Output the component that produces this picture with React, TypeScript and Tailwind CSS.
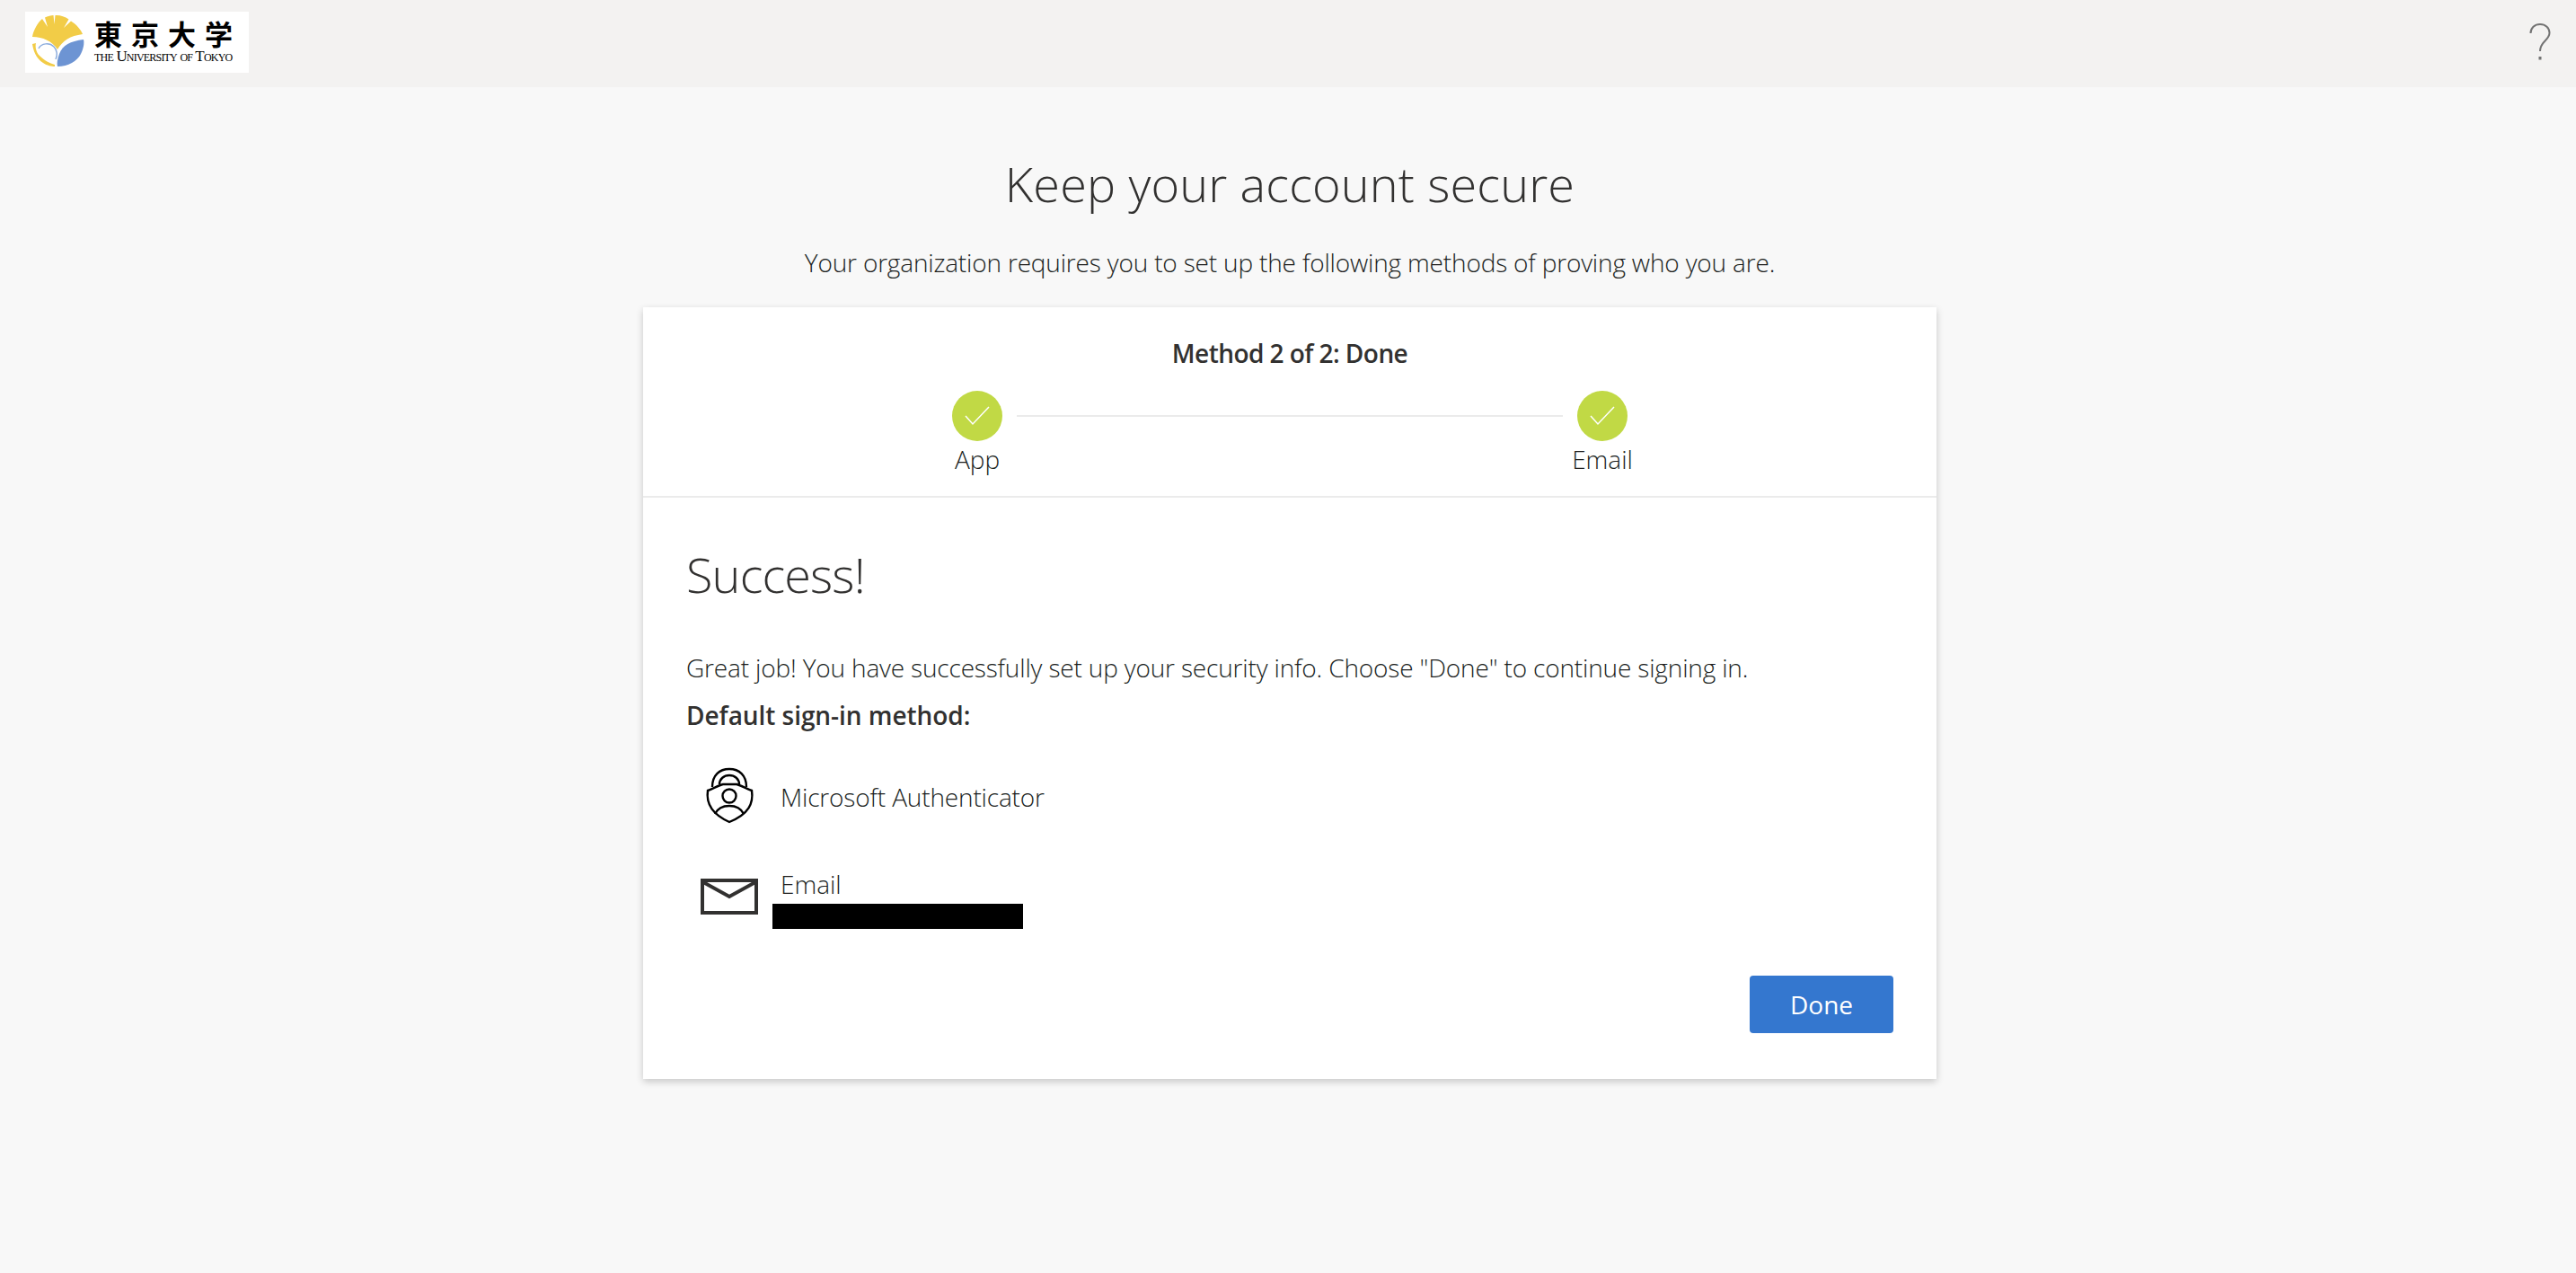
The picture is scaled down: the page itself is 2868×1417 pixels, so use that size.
const font = "font-['Open_Sans','Noto_Sans',sans-serif]";

function Logo() {
  return (
    <div className="flex h-[68px] w-[249px] items-start bg-white">
      <svg width="80" height="68" viewBox="0 3 80 68" className="-mr-[3px] shrink-0">
        <path d="M8 31 C9 24 14 15 19 11 L25 20 L22 9.5 C25 8 29 7 31.5 7 L32.5 17 L33.5 7 C38 6.5 44 8 48.5 11.5 L43 21 L51 13.5 C57 17 62 23 64 28 C50 30 42 35 36 45 C30 36 20 31 8 31Z" fill="#f2cc47" />
        <path d="M65 34 C50 36 42 40 38 50 C36 56 35 60 36 64 C48 64 58 58 62 50 C65 44 66 38 65 34Z" fill="#6d94d3" />
        <path d="M8 39 C9 46 12 55 20 60 C24 63 30 64 33 64 L33 62 C27 60 22 58 16 52 C12 48 11 42 12 38Z" fill="#f2cc47" />
        <path d="M15 44 C18 38 27 37 32 42 C36 46 36 52 34 56" fill="none" stroke="#8eaede" strokeWidth="1.5" />
      </svg>
      <div className="flex flex-col items-start pt-[6px]">
        <div className="font-['Noto_Sans_CJK_JP',serif] text-[31px] leading-[36px] font-bold tracking-[10px] whitespace-nowrap text-black">東京大学</div>
        <div className="mt-[1px] font-['Liberation_Serif',serif] text-[17px] leading-[14px] tracking-[-0.8px] whitespace-nowrap text-black [font-variant-caps:small-caps]">the University of Tokyo</div>
      </div>
    </div>
  );
}

function Step({ label }: { label: string }) {
  return (
    <div className="flex w-[80px] flex-col items-center">
      <div className="h-[56px] w-[56px] rounded-full bg-[#c1d945]">
        <svg width="56" height="56" viewBox="0 0 56 56" fill="none">
          <path d="M15 28 L23 37 L41 18" stroke="#fff" strokeWidth="1.5" />
        </svg>
      </div>
      <div className="text-[28px] leading-[40px] font-light">{label}</div>
    </div>
  );
}

export default function App() {
  return (
    <div className={`${font} min-h-[1417px] bg-[#f8f8f8] text-[#201f1e]`}>
      <header className="flex h-[97px] items-start justify-between bg-[#f3f2f1] pt-[13px] pr-[28px] pl-[28px]">
        <Logo />
        <svg width="24" height="42" viewBox="0 0 24 42" fill="none" className="mt-[13px]">
          <path d="M1.5 11 C1.5 5 6 1 12 1 C18 1 22.5 5 22.5 10.5 C22.5 19 12 20 12 31" stroke="#737373" strokeWidth="2" />
          <rect x="10.5" y="37" width="3" height="3.5" fill="#737373" />
        </svg>
      </header>
      <main className="flex flex-col items-center pl-[4px]">
        <h1 className="mt-[72px] text-[54px] leading-[70px] font-light tracking-[0.15px] text-[#323130]">Keep your account secure</h1>
        <p className="mt-[33px] text-[28px] leading-[40px] font-light tracking-[-0.17px]">Your organization requires you to set up the following methods of proving who you are.</p>
        <section className="mt-[30px] w-[1440px] bg-white shadow-[0_3px_8px_rgba(0,0,0,0.2)]">
          <div className="flex h-[212px] flex-col items-center border-b-2 border-[#ebebeb] pt-[31px]">
            <div className="text-[28px] leading-[40px] font-semibold tracking-[-0.55px] text-[#323130]">Method 2 of 2: Done</div>
            <div className="mt-[22px] flex w-[776px] items-start justify-between">
              <Step label="App" />
              <div className="mt-[27px] h-[2px] w-[608px] bg-[#ebebeb]" />
              <Step label="Email" />
            </div>
          </div>
          <div className="flex h-[647px] flex-col px-[48px]">
            <h2 className="mt-[47px] text-[54px] leading-[76px] font-light tracking-[-0.85px] text-[#323130]">Success!</h2>
            <p className="mt-[46px] text-[28px] leading-[40px] font-light tracking-[-0.16px]">Great job! You have successfully set up your security info. Choose "Done" to continue signing in.</p>
            <p className="mt-[13px] text-[28px] leading-[40px] font-semibold tracking-[-0.05px] text-[#323130]">Default sign-in method:</p>
            <div className="mt-[34px] flex h-[72px]">
              <div className="w-[105px] pl-[16px]">
                <svg width="70" height="72" viewBox="0 0 70 72" fill="none" stroke="#000" strokeWidth="2.4">
                  <path d="M8 30 C14 28 20 24 25 23 L40 23 C45 24 51 28 57 30 C59 44 54 56 32 65 C12 56 6 44 8 30Z" />
                  <path d="M13 26 C13 13 21 6 32 6 C43 6 51 13 51 26" />
                  <path d="M21 23 C21 17 26 13 32 13 C38 13 43 17 43 23" />
                  <circle cx="32" cy="36" r="7.5" />
                  <path d="M16 56 C19 50 25 47 32 47 C39 47 45 50 48 56" />
                </svg>
              </div>
              <div className="pt-[17px] text-[28px] leading-[40px] font-light tracking-[-0.15px]">Microsoft Authenticator</div>
            </div>
            <div className="mt-[42px] flex">
              <div className="w-[105px] pt-[14px] pl-[16px]">
                <svg width="64" height="40" viewBox="0 0 64 40" fill="none" stroke="#323130" strokeWidth="4">
                  <rect x="2" y="2" width="60" height="36" />
                  <path d="M3 4 L32 20 L61 4" />
                </svg>
              </div>
              <div className="flex flex-col">
                <div className="text-[28px] leading-[40px] font-light">Email</div>
                <div className="mt-[2px] -ml-[9px] h-[28px] w-[279px] bg-black" />
              </div>
            </div>
            <div className="mt-[52px] flex justify-end">
              <button className="h-[64px] w-[160px] rounded-[4px] bg-[#3477cf] text-[28px] font-normal text-white">Done</button>
            </div>
          </div>
        </section>
      </main>
    </div>
  );
}
